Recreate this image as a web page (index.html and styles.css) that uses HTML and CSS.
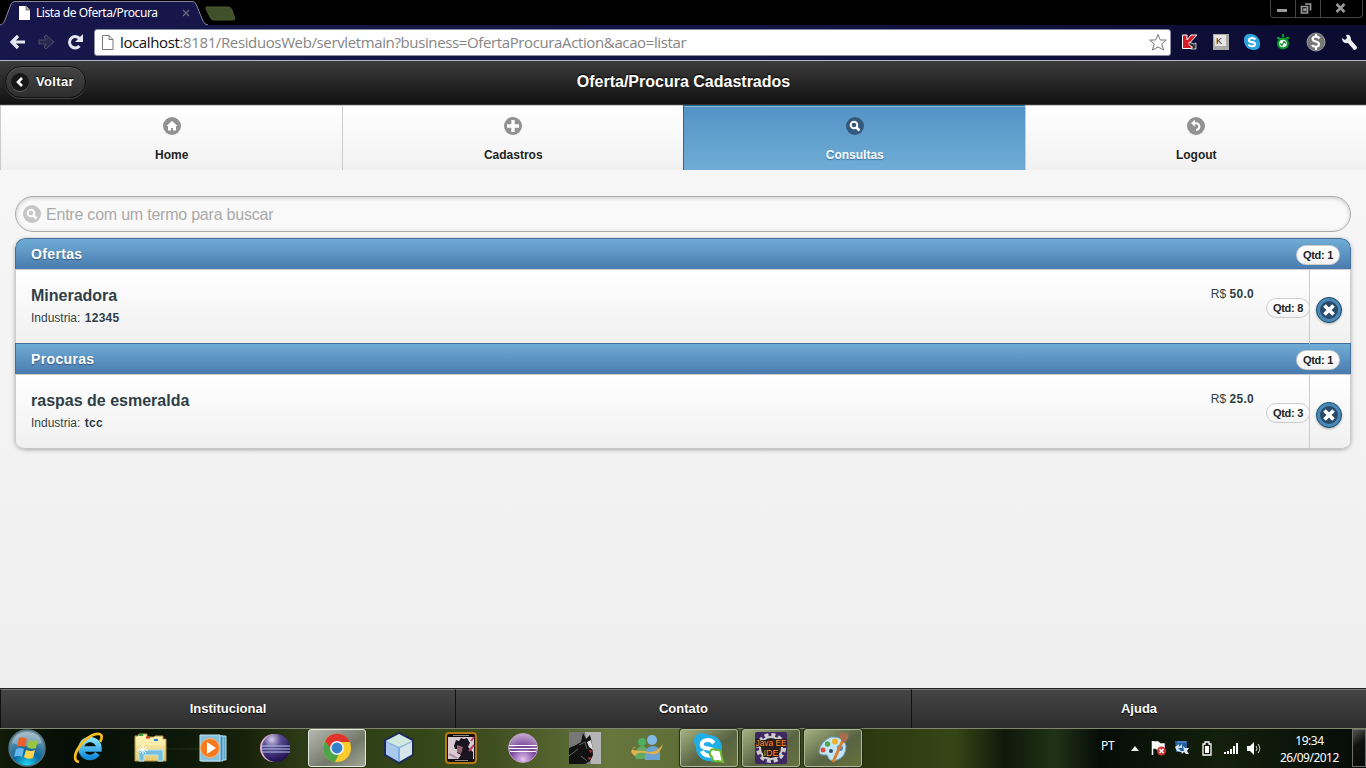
FILE: index.html
```html
<!DOCTYPE html>
<html lang="pt">
<head>
<meta charset="utf-8">
<title>Lista de Oferta/Procura</title>
<link rel="stylesheet" href="styles.css">
</head>
<body>
<div class="screen">
<div class="tabstrip">
  <div class="tab">
    <svg class="tab-shape" width="208" height="25" viewBox="0 0 208 25"><path d="M0 25C3 24 4 23 5 20L11 4Q12 1.500 15 1.500H192Q195 1.500 196 4L203 21Q204 24.500 208 25" fill="#16164a" stroke="#85859e"/></svg>
    <div class="tab-content">
      <svg width="12" height="14" viewBox="0 0 12 14"><path d="M0 0H7L11 4V14H0Z" fill="#fff"/><path d="M7 0V4H11" fill="#aaa" stroke="#555" stroke-width=".7"/></svg>
      <span class="tab-title">Lista de Oferta/Procura</span>
      <svg width="8" height="8" viewBox="0 0 8 8"><path d="M1 1L7 7M7 1L1 7" stroke="#696982" stroke-width="1.300"/></svg>
    </div>
  </div>
  <svg class="new-tab" width="31" height="15" viewBox="0 0 31 15"><path d="M1 1H23Q26 1 27 4L30 13Q30 14 27 14H9Q6 14 5 11L1 3Z" fill="#40502a" stroke="#4b5a31"/></svg>
  <div class="window-buttons">
    <span class="wb"><svg width="24" height="16"><path d="M6 10.500H16" stroke="#999" stroke-width="3"/></svg></span>
    <span class="wb"><svg width="24" height="16"><path d="M9 4H14.500V10.500M5.500 6.500H11.500V13H5.500ZM8 9H9.500V10.500H8Z" fill="none" stroke="#999" stroke-width="1.700"/></svg></span>
    <span class="wb wb-close"><svg width="40" height="16"><path d="M15.500 4L23.500 12M23.500 4L15.500 12" stroke="#999" stroke-width="2.500"/></svg></span>
  </div>
</div>
<div class="toolbar">
  <svg class="nav-arrow" width="16" height="16" viewBox="0 0 16 16"><path d="M16 8H3M9 2L3 8L9 14" fill="none" stroke="#e6e6f0" stroke-width="3.200"/></svg>
  <svg class="nav-arrow" width="16" height="16" viewBox="0 0 16 16"><path d="M1 6H8L6 3L8 1L16 8L8 15L6 13L8 10H1Z" fill="#28284f" stroke="#4d4d6e"/></svg>
  <svg class="reload" width="17" height="17" viewBox="0 0 17 17"><path d="M12.500 12A5.700 5.700 0 1 1 12.500 4.500" fill="none" stroke="#e6e6f0" stroke-width="3"/><path d="M16 0V8H8Z" fill="#e6e6f0"/></svg>
  <div class="omnibox">
    <svg width="12" height="15" viewBox="0 0 12 15"><path d="M.5.5H7L11 4.500V14.500H.5ZM7 .5V4.500H11" fill="#fff" stroke="#777"/></svg>
    <span class="url"><b>localhost</b>:8181/ResiduosWeb/servletmain?business=OfertaProcuraAction&amp;acao=listar</span>
    <svg class="star" width="20" height="19" viewBox="0 0 20 19"><path d="M10 1.500L12.300 7H18.300L13.800 10.800L15.600 17L10 14L4.400 17L6.200 10.800L1.700 7H7.700Z" fill="#fff" stroke="#777" stroke-linejoin="round"/></svg>
  </div>
  <div class="extensions">
    <svg width="16" height="16" viewBox="0 0 16 16"><path d="M.5 1H5V6L9 1H15L8 8.500L10 14.500H.5Z" fill="#d51c26" stroke="#fff"/><path d="M7 8L12 10L14 9V15H9L10.500 13L7 11Z" fill="#333" stroke="#fff" stroke-width=".7"/></svg>
    <svg width="16" height="16" viewBox="0 0 16 16"><path d="M0 0H16V16H0Z" fill="#aaa"/><path d="M1 1H13V12H2Z" fill="#e7e5e2"/><text x="3" y="10" font-size="9" fill="#222">K</text></svg>
    <svg width="16" height="16" viewBox="0 0 16 16"><rect width="12" height="12" rx="5" fill="#2ba3df"/><rect x="4" y="4" width="12" height="12" rx="5" fill="#2ba3df"/><circle cx="8" cy="8" r="7.500" fill="#2ba3df"/><path d="M11.500 5.500C9 3 4 4 5 7C6 9 11 7 11 10C11 13 6 13 4.500 10.500" fill="none" stroke="#fff" stroke-width="2.100"/></svg>
    <svg width="16" height="16" viewBox="0 0 16 16"><path d="M7 0H9V3H7Z" fill="#09992d"/><path d="M2 4L4 4L6 6M14 4L12 4L10 6" stroke="#09992d" stroke-width="2"/><circle cx="8" cy="9.500" r="6" fill="#09992d"/><circle cx="8" cy="9.500" r="3.800" fill="#fff"/><path d="M5 9.500L7 11.500L9 7.500L11 9.500" fill="none" stroke="#098a28" stroke-width="1.200"/></svg>
    <svg width="20" height="20" viewBox="0 0 20 20"><circle cx="10" cy="10" r="9" fill="#777" stroke="#999"/><path d="M13.500 6.500C11 3 5 5 7 8C8 10 13 9 13 12C13 16 7 15 6 13" fill="none" stroke="#fff" stroke-width="2.200"/><path d="M10 2V5M10 15V18" stroke="#fff" stroke-width="2"/></svg>
    <svg width="17" height="17" viewBox="0 0 17 17"><path d="M1 4L4 6L6 4L5 1Q10 0 10 6L16 13Q16 16 13 16L7 9Q1 10 1 4Z" fill="#eee"/></svg>
  </div>
</div>
<main class="page">
  <header class="header">
    <a class="back"><svg width="18" height="18" viewBox="0 0 18 18"><circle cx="9" cy="9" r="9" fill="#171717"/><path d="M11 5L7 9L11 13" fill="none" stroke="#fff" stroke-width="2.600"/></svg><span>Voltar</span></a>
    <h1>Oferta/Procura Cadastrados</h1>
  </header>
  <nav class="nav">
    <a><svg width="18" height="18" viewBox="0 0 18 18"><circle cx="9" cy="9" r="9" fill="#929292"/><path d="M9 4L14.500 9H13V13.500H10V11H8V13.500H5V9H3.500Z" fill="#fff"/></svg><span>Home</span></a>
    <a><svg width="18" height="18" viewBox="0 0 18 18"><circle cx="9" cy="9" r="9" fill="#929292"/><path d="M3 9H15M9 3V15" stroke="#fff" stroke-width="3.300"/></svg><span>Cadastros</span></a>
    <a class="active"><svg width="18" height="18" viewBox="0 0 18 18"><circle cx="9" cy="9" r="9" fill="#34597b"/><circle cx="8" cy="8" r="3.300" fill="none" stroke="#fff" stroke-width="2"/><path d="M10.300 10.300L13.500 13.500" stroke="#fff" stroke-width="2.500"/></svg><span>Consultas</span></a>
    <a><svg width="18" height="18" viewBox="0 0 18 18"><circle cx="9" cy="9" r="9" fill="#929292"/><path d="M6 6.200H9A3.400 3.400 0 0 1 9 13" fill="none" stroke="#fff" stroke-width="2"/><path d="M4 6.200L8 2.700V9.700Z" fill="#fff"/></svg><span>Logout</span></a>
  </nav>
  <section class="content">
    <div class="search"><svg width="18" height="18" viewBox="0 0 18 18"><circle cx="9" cy="9" r="9" fill="#c6c6c6"/><circle cx="8" cy="8" r="3.300" fill="none" stroke="#fff" stroke-width="2"/><path d="M10.300 10.300L13.500 13.500" stroke="#fff" stroke-width="2.500"/></svg><span>Entre com um termo para buscar</span></div>
    <div class="list">
      <div class="divider"><span>Ofertas</span><span class="count">Qtd: 1</span></div>
      <div class="item">
        <div class="desc"><h3>Mineradora</h3><p>Industria: <b>12345</b></p></div>
        <p class="price">R$ <b>50.0</b></p><span class="count">Qtd: 8</span>
        <a class="remove"><svg width="28" height="28" viewBox="0 0 28 28"><circle cx="14" cy="14" r="12.500" fill="#4b88b8" stroke="#174f70"/><circle cx="14" cy="14" r="9" fill="#294c6b"/><path d="M9.500 9.500L18.500 18.500M18.500 9.500L9.500 18.500" stroke="#fff" stroke-width="3.700"/></svg></a>
      </div>
      <div class="divider"><span>Procuras</span><span class="count">Qtd: 1</span></div>
      <div class="item">
        <div class="desc"><h3>raspas de esmeralda</h3><p>Industria: <b>tcc</b></p></div>
        <p class="price">R$ <b>25.0</b></p><span class="count">Qtd: 3</span>
        <a class="remove"><svg width="28" height="28" viewBox="0 0 28 28"><circle cx="14" cy="14" r="12.500" fill="#4b88b8" stroke="#174f70"/><circle cx="14" cy="14" r="9" fill="#294c6b"/><path d="M9.500 9.500L18.500 18.500M18.500 9.500L9.500 18.500" stroke="#fff" stroke-width="3.700"/></svg></a>
      </div>
    </div>
  </section>
  <footer class="footer"><a>Institucional</a><a>Contato</a><a>Ajuda</a></footer>
</main>
<div class="taskbar">
  <svg width="0" height="0" class="defs"><defs>
    <radialGradient id="orb" cx=".5" cy="1" r=".9"><stop stop-color="#21e0ff"/><stop offset=".45" stop-color="#08679f"/><stop offset="1" stop-color="#789ba9"/></radialGradient>
    <radialGradient id="ecl" cx=".35" cy=".2" r=".8"><stop stop-color="#d8cde9"/><stop offset=".4" stop-color="#574b91"/><stop offset="1" stop-color="#211052"/></radialGradient>
    <radialGradient id="purple" cx=".5" cy=".9" r=".9"><stop stop-color="#e8c4f3"/><stop offset=".5" stop-color="#75469a"/><stop offset="1" stop-color="#c7abcf"/></radialGradient>
    <linearGradient id="blue" x2="0" y2="1"><stop stop-color="#85e2ff"/><stop offset="1" stop-color="#148bdc"/></linearGradient>
    <linearGradient id="folder" x2="0" y2="1"><stop stop-color="#fff7bd"/><stop offset="1" stop-color="#e6c96b"/></linearGradient>
  </defs></svg>
  <div class="start"><svg width="38" height="38" viewBox="0 0 38 38"><circle cx="19" cy="19" r="18" fill="url(#orb)" stroke="#53717e" stroke-width="1.500"/><path d="M4 14Q7 3 19 3T34 14Q18 20 4 14Z" fill="#fff" opacity=".3"/><path d="M11 9Q15 7 19 10L17 18Q12 16 9 18Z" fill="#ec602c"/><path d="M21 11Q25 13 30 11L28 19Q23 21 19 18Z" fill="#9bc644"/><path d="M8 20Q12 18 16 20L14 28Q10 26 6 28Z" fill="#65b7ef"/><path d="M18 21Q23 23 27 21L25 29Q20 31 16 28Z" fill="#ffd34e"/></svg></div>
  <div class="task"><svg width="32" height="32" viewBox="0 0 32 32"><path d="M24.500 21.500A9 9 0 1 1 26 17H8" fill="none" stroke="url(#blue)" stroke-width="5.500"/><path d="M6 30C-6 28 12 1 26 2Q31 3 27 10" fill="none" stroke="#f7be20" stroke-width="2.700"/></svg></div>
  <div class="task"><svg width="34" height="32" viewBox="0 0 34 32"><path d="M1 4H4L5 2H13V5H20L21 4H29V7H32V29H1Z" fill="url(#folder)" stroke="#b69648"/><path d="M2 9H31M2 12H31" stroke="#fff4bb"/><path d="M5 3H9" stroke="#24a644" stroke-width="2"/><path d="M12 5.500H16" stroke="#d43924" stroke-width="2"/><path d="M20 8H24" stroke="#237fd5" stroke-width="2"/><path d="M5 29V18H29V29H24V23H10V29Z" fill="#75bedc" stroke="#b9e6f5"/><path d="M9 13V22M4 18H14M6 15L12 21M12 15L6 21" stroke="#fff"/></svg></div>
  <div class="task"><svg width="28" height="28" viewBox="0 0 28 28"><path d="M5 2H27V26H5Z" fill="#66a8ca" stroke="#b0dff0"/><path d="M3 2H24V27H3Z" fill="#428bbc" stroke="#9ed7ef"/><path d="M1 1H21V27H1Z" fill="#88c1dd" stroke="#bce4f2"/><circle cx="11" cy="14" r="9.500" fill="#f47a21" stroke="#ffb66b"/><path d="M8 8L17 14L8 20Z" fill="#fff"/></svg></div>
  <div class="task"><svg width="32" height="32" viewBox="0 0 32 32"><circle cx="15" cy="16" r="14" fill="#dbaed0"/><circle cx="17" cy="16" r="14" fill="url(#ecl)"/><path d="M3 14H31M3 17H31M3 20H31" stroke="#b9c8ed" stroke-width="1.200"/></svg></div>
  <div class="task selected"><svg width="30" height="30" viewBox="0 0 30 30"><circle cx="15" cy="15" r="14" fill="#f9cd2c"/><path d="M3 8A14 14 0 0 1 28 9H15L9 17Z" fill="#df332c"/><path d="M3 8L11 19L17 21L13 29A14 14 0 0 1 3 8Z" fill="#4da449"/><circle cx="15" cy="15" r="7" fill="#eee"/><circle cx="15" cy="15" r="5.400" fill="#337fca"/></svg></div>
  <div class="task"><svg width="32" height="34" viewBox="0 0 32 34"><path d="M16 2L30 9V24L16 32L2 24V9Z" fill="#7eaee5" stroke="#202858" stroke-width="2"/><path d="M3 10L16 3L29 10L16 16Z" fill="#d0e8df"/><path d="M3 11L15 17V30L3 23Z" fill="#a9c9ed"/><path d="M17 17L29 11V23L17 30Z" fill="#d6e5eb"/></svg></div>
  <div class="task"><svg width="32" height="32" viewBox="0 0 32 32"><rect x="1" y="1" width="30" height="30" rx="3" fill="#120e11" stroke="#b47817" stroke-width="2"/><path d="M3 5H29V27H3Z" fill="#d9cbd3"/><path d="M9 14L11 8L14 9L16 6L19 7L22 6L25 11L23 15L28 20V27H13L16 23L12 21L13 17L10 17Z" fill="#19141f"/><path d="M12 13L18 15L16 22L12 20Z" fill="#966271"/><path d="M26 9L29 5M24 19L29 13" stroke="#bd4260" stroke-width="2"/><path d="M4 22L12 26" stroke="#a994aa" stroke-width="2"/><path d="M8 3.500H24M10 28.500H23" stroke="#aaa" stroke-width=".8"/></svg></div>
  <div class="task"><svg width="32" height="32" viewBox="0 0 32 32"><circle cx="16" cy="16" r="14.500" fill="url(#purple)" stroke="#bd9bc7"/><path d="M2 13.500H30M2 16.500H30M3 19.500H29" stroke="#fff" stroke-width="1.200"/></svg></div>
  <div class="task"><svg width="32" height="32" viewBox="0 0 32 32"><path d="M0 0H32V32H0Z" fill="#777"/><path d="M16 0H32V32H22Z" fill="#b5b5b5"/><path d="M0 16L7 13L12 10L14 1L17 7L21 3L23 11L24 23L21 29L16 32H0Z" fill="#111"/><path d="M10 13L16 10L18 17M0 24L9 17M12 24L18 29" fill="none" stroke="#666"/><path d="M18 10L22 8L24 18L20 15Z" fill="#ddd"/><path d="M20 18L24 19L21 21ZM19 25L23 26L20 28Z" fill="#b5363c"/></svg></div>
  <div class="task"><svg width="34" height="32" viewBox="0 0 34 32"><circle cx="12" cy="10" r="4" fill="#4fae60"/><path d="M6 27V19Q8 14 13 14Q17 15 18 20V27Z" fill="#63ab65"/><circle cx="22" cy="8" r="5" fill="#82b8e4"/><path d="M15 28V20Q17 14 23 14Q29 14 30 20V28Z" fill="#6da3d1"/><path d="M7 15Q1 15 3 18Q8 19 15 19Q25 23 33 12Q30 24 21 22Q13 20 8 21Q5 22 6 25Q-4 18 7 15Z" fill="#e4b04b"/></svg></div>
  <div class="task open"><svg width="34" height="34" viewBox="0 0 34 34"><circle cx="10" cy="10" r="8" fill="#20aee9"/><circle cx="17" cy="17" r="13" fill="#20aee9"/><circle cx="22" cy="23" r="8" fill="#20aee9"/><path d="M22 12C17 7 8 9 10 15C12 19 22 16 22 21C22 26 12 26 10 20" fill="none" stroke="#fff" stroke-width="4"/><path d="M18 21Q19 17 24 19Q29 18 29 23L31 31L26 30Q20 31 20 26Q17 24 18 21Z" fill="#fff" stroke="#6eb82b" stroke-width="2"/></svg></div>
  <div class="task open"><svg width="32" height="32" viewBox="0 0 32 32"><rect width="32" height="32" rx="2" fill="#3e2861"/><circle cx="16" cy="16" r="13" fill="none" stroke="#ccc" stroke-width="4" stroke-dasharray="4 2.800"/><circle cx="16" cy="16" r="11" fill="#222" stroke="#ccc" stroke-width="2"/><text class="java-label" x="16" y="14" textLength="31" lengthAdjust="spacingAndGlyphs">Java EE</text><text class="java-label" x="16" y="24">IDE</text></svg></div>
  <div class="task open"><svg width="34" height="32" viewBox="0 0 34 32"><path d="M3 19Q5 9 15 5Q28 4 30 14Q30 25 21 28Q13 30 12 25Q12 22 8 23Q3 23 3 19Z" fill="#c3e5f5" stroke="#6ba1bd"/><circle cx="7" cy="18" r="2.500" fill="#d94f3b"/><circle cx="11.500" cy="12" r="2.700" fill="#52a852"/><circle cx="19" cy="9.500" r="3" fill="#edb42c"/><circle cx="15" cy="19" r="2" fill="#354d62"/><circle cx="24" cy="16" r="3" fill="#5086d0"/><path d="M17 30L27 8" stroke="#d78130" stroke-width="3"/><path d="M25 8Q22 3 24 0Q29 3 32 1Q34 7 28 11Z" fill="#a96e49"/></svg></div>
  <div class="tray">
    <span class="lang">PT</span>
    <span class="tray-icon"><svg width="8" height="5" viewBox="0 0 8 5"><path d="M0 5L4 0L8 5Z" fill="#eee"/></svg></span>
    <span class="tray-icon"><svg width="16" height="16" viewBox="0 0 16 16"><path d="M1.500 1V15M2 2H7L9 4H13V10H7L5 8H2Z" fill="#fff" stroke="#fff" stroke-width="1.500"/><circle cx="10.500" cy="11" r="4.500" fill="#cf3030"/><path d="M8.500 9L12.500 13M12.500 9L8.500 13" stroke="#fff" stroke-width="1.500"/></svg></span>
    <span class="tray-icon"><svg width="16" height="16" viewBox="0 0 16 16"><path d="M0 1H12V12H1Z" fill="#235b9b"/><path d="M0 7L4 4V7L7 4V8H3L6 11V12L2 11ZM8 6L10 8L14 8L12 11L14 14H11L9 12L7 14L6 11H9Z" fill="#d5eaf4"/><path d="M2 2H11" stroke="#65a5df"/></svg></span>
    <span class="tray-icon"><svg width="10" height="15" viewBox="0 0 10 15"><path d="M3 1H7V3H9V14H1V3H3Z" fill="none" stroke="#fff" stroke-width="1.300"/><path d="M3 5H7V12H3Z" fill="#fff"/></svg></span>
    <span class="tray-icon"><svg width="15" height="12" viewBox="0 0 15 12"><path d="M1 10V12M4 9V12M7 7V12M10 4V12M13 1V12" stroke="#fff" stroke-width="2"/></svg></span>
    <span class="tray-icon"><svg width="16" height="15" viewBox="0 0 16 15"><path d="M0 5H3L7 1V14L3 10H0Z" fill="#fff"/><path d="M9 5Q11 7.500 9 10M11 3Q14.500 7.500 11 12" fill="none" stroke="#ddd"/></svg></span>
    <div class="clock"><span>19:34</span><span>26/09/2012</span></div>
    <div class="show-desktop"></div>
  </div>
</div>
</div>
</body>
</html>
```
FILE: styles.css
```css
* { box-sizing: border-box; }
body { margin: 0; font-family: "Liberation Sans", Arial, sans-serif; }
svg { display: block; flex: none; overflow: visible; }
h1, h3, p { margin: 0; }
.screen { width: 1366px; height: 768px; display: flex; flex-direction: column; overflow: hidden; }
.tabstrip { height: 25px; background: #000; display: flex; flex: none; }
.tab { width: 208px; height: 25px; position: relative; }
.tab-shape { position: absolute; inset: 0; }
.tab-content { position: relative; height: 25px; display: flex; align-items: center; padding: 1px 18px 0 19px; }
.tab-title { color: #fff; font: 12px/16px "Noto Sans", sans-serif; letter-spacing: -.42px; margin-left: 5px; flex: 1; white-space: nowrap; }
.new-tab { margin: 6px 0 0 -3px; }
.window-buttons { margin: 0 3px 0 auto; display: flex; height: 18px; width: 93px; border: 1px solid #444; border-top: 0; border-radius: 0 0 4px 4px; }
.wb { width: 25px; border-right: 1px solid #444; }
.wb-close { width: 41px; border: 0; }
.toolbar { height: 36px; flex: none; display: flex; align-items: center; padding: 0 8px 1px 9px; background: linear-gradient(90deg, #17174b, #121243 60%, #0b0b30); border-bottom: 1px solid #b4b6c2; }
.nav-arrow { margin-right: 13px; }
.reload { margin-right: 10px; }
.omnibox { width: 1077px; height: 27px; background: #fff; border: 1px solid #8b8ba3; border-radius: 3px; display: flex; align-items: center; padding: 0 2px 0 7px; }
.url { color: #858585; font: 15px/22px "Open Sans", sans-serif; letter-spacing: -.375px; margin-left: 6px; flex: 1; white-space: nowrap; }
.url b { font-weight: 400; color: #111; }
.extensions { flex: 1; display: flex; align-items: center; justify-content: space-between; margin-left: 11px; }
.page { height: 667px; flex: none; display: flex; flex-direction: column; background: linear-gradient(#f8f8f8, #eee); }
.header { height: 44px; display: grid; grid-template-columns: 1fr auto 1fr; align-items: center; background: linear-gradient(#3c3c3c, #111); border-bottom: 1px solid #333; color: #fff; text-shadow: 0 -1px 1px #000; }
.header h1 { font-size: 16px; line-height: 20px; margin: -1px 0 0 1px; }
.back { width: 81px; height: 32px; margin: -2px 0 0 5px; border: 1px solid #111; border-radius: 16px; display: flex; align-items: center; gap: 7px; padding-left: 5px; background: linear-gradient(#444, #2d2d2d); box-shadow: inset 0 1px #5a5a5a, 0 1px #444; font: bold 13px "Liberation Sans", sans-serif; letter-spacing: .35px; }
.back svg { border-radius: 9px; box-shadow: 0 1px #666; }
.nav { height: 65px; display: grid; grid-template-columns: repeat(4, 1fr); }
.nav a { display: flex; flex-direction: column; align-items: center; padding: 11px 0 0 1px; border: 1px solid #ccc; border-width: 1px 0 0 1px; background: linear-gradient(#fff, #f1f1f1); color: #222; font: bold 12px/16px "Liberation Sans", sans-serif; text-shadow: 0 1px #fff; }
.nav span { margin-top: 12px; }
.nav .active { border-color: #246b91; background: linear-gradient(#5393c5, #6facd5); color: #fff; text-shadow: 0 1px 1px #3373a5; box-shadow: inset 0 1px #8bb8d9; }
.content { flex: 1; padding: 26px 15px 0; }
.search { height: 36px; border: 1px solid #aaa; border-radius: 18px; background: #f9f9f9; box-shadow: inset 0 1px 4px rgba(0,0,0,.2); display: flex; align-items: center; gap: 5px; padding-left: 7px; color: #aaa; font-size: 16px; letter-spacing: -.22px; }
.search span { padding-top: 2px; }
.list { margin-top: 6px; border-radius: 10px; overflow: hidden; height: 211px; box-shadow: 0 1px 4px rgba(0,0,0,.3); border-bottom: 1px solid #c5c5c5; }
.divider { height: 31px; background: linear-gradient(#6facd5, #497bae); border: 1px solid #456f9a; border-bottom: 0; display: flex; align-items: center; padding: 0 10px 0 15px; color: #fff; font: bold 14px/16px "Liberation Sans", sans-serif; letter-spacing: .35px; text-shadow: 0 1px 1px #305778; }
.list > .divider:first-child { border-radius: 10px 10px 0 0; }
.count { width: 44px; height: 20px; border: 1px solid #ccc; border-radius: 10px; text-align: center; margin-left: auto; background: linear-gradient(#fff, #f3f3f3); color: #222; font: bold 11px/18px "Liberation Sans", sans-serif; letter-spacing: -.3px; text-shadow: 0 1px #fff; white-space: nowrap; }
.divider .count { margin-top: 2px; }
.item { height: 74px; border: 1px solid #ccc; border-bottom: 0; background: linear-gradient(#fff, #f0f0f0); display: flex; align-items: flex-start; color: #2f3e46; font-size: 12px; text-shadow: 0 1px #fff; }
.item b { letter-spacing: .3px; }
.desc { flex: 1; padding: 16px 0 0 15px; }
.desc h3 { font-size: 16px; line-height: 20px; }
.desc p { line-height: 16px; margin-top: 4px; }
.desc b { margin-left: 1px; }
.price { margin: 17px 12px 0 0; line-height: 14px; }
.item .count { margin: 28px -1px 0 0; }
.remove { width: 41px; height: 74px; border-left: 1px solid #ccc; padding: 26px 0 0 5px; }
.remove svg { filter: drop-shadow(0 1px 1px #aaa); }
.footer { height: 40px; display: grid; grid-template-columns: 455px 456px 455px; border-top: 1px solid #222; background: #111; }
.footer a { border-left: 1px solid #111; border-top: 1px solid #777; background: linear-gradient(#454545, #2d2d2d); color: #fff; text-align: center; font: bold 13px/38px "Liberation Sans", sans-serif; text-shadow: 0 1px 1px #000; }
.taskbar { height: 40px; flex: none; display: flex; align-items: flex-start; border-top: 1px solid #80866d; background: radial-gradient(ellipse at 190px 20px, #29381b 0, transparent 48px), linear-gradient(90deg, #111b08 0, #060e05 65px, #0b1708 170px, #172109 245px, #2d3a16 300px, #344617 420px, #3f4e1f 490px, #66763c 610px, #5d6c36 700px, #2b380f 860px, #354616 955px, #10180a 1005px, #203317 1055px, #060c07 1100px, #13200c 1220px, #050a07); }
.defs { position: absolute; }
.start { width: 54px; margin-right: 6px; display: flex; justify-content: center; }
.task { width: 58px; height: 38px; margin-right: 4px; flex: none; display: flex; align-items: center; justify-content: center; border-radius: 3px; }
.selected { background: linear-gradient(145deg, #b5b9b0, #737969 60%, #a2a698); border: 1px solid #e5e9df; box-shadow: 0 0 1px #000; }
.open { background: linear-gradient(145deg, #a4b080, #586443 55%, #66713d); border: 1px solid #b0b99b; box-shadow: 0 0 1px 1px #242d16; }
.java-label { font: 9px "Liberation Sans", sans-serif; fill: #ff9130; text-anchor: middle; stroke: #2a1714; stroke-width: 2px; paint-order: stroke; }
.tray { flex: 1; height: 38px; display: flex; align-items: center; color: #fff; font: 12px "Noto Sans", sans-serif; padding-left: 235px; }
.lang { width: 22px; font-size: 12px; letter-spacing: -.3px; margin-top: -5px; }
.tray-icon { width: 24px; flex: none; display: flex; justify-content: center; }
.clock { display: flex; flex-direction: column; align-items: center; line-height: 17px; letter-spacing: -.5px; margin: 1px 0 0 13px; }
.show-desktop { width: 14px; height: 38px; margin-left: auto; border: 1px solid #6c6f68; background: linear-gradient(145deg, #555, #111 40%, #090b09); }
```
